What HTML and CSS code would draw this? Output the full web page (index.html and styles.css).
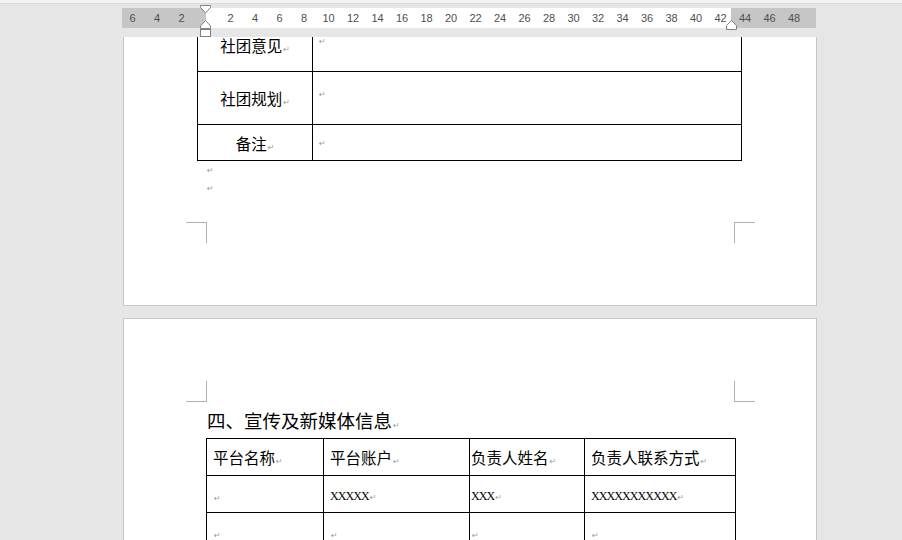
FILE: index.html
```html
<!DOCTYPE html>
<html lang="zh-CN">
<head>
<meta charset="utf-8">
<title>社团文档</title>
<link rel="stylesheet" href="styles.css">
</head>
<body>
<div class="topband"></div>
<div class="rulerbar">
  <div class="ruler">
    <div class="ticks">
      <span>6</span><span>4</span><span>2</span><span></span>
      <span>2</span><span>4</span><span>6</span><span>8</span><span>10</span><span>12</span><span>14</span><span>16</span><span>18</span><span>20</span><span>22</span><span>24</span>
      <span>26</span><span>28</span><span>30</span><span>32</span><span>34</span><span>36</span><span>38</span><span>40</span><span>42</span><span>44</span><span>46</span><span>48</span>
    </div>
    <svg class="marker-left" width="12" height="33" viewBox="0 0 12 33">
      <path d="M0.5 0.5 H10.5 V2.5 L5.5 8 L0.5 2.5 Z" fill="#fff" stroke="#808080"/>
      <path d="M5.5 15.5 L10.5 21 V23.5 H0.5 V21 Z" fill="#fff" stroke="#808080"/>
      <rect x="0.5" y="24.5" width="10" height="7" fill="#fff" stroke="#808080"/>
    </svg>
    <svg class="marker-right" width="12" height="11" viewBox="0 0 12 11">
      <path d="M5.5 0.5 L10.5 5.5 V9.5 H0.5 V5.5 Z" fill="#fff" stroke="#808080"/>
    </svg>
  </div>
</div>

<div class="page page1">
  <table class="t1">
    <colgroup><col class="c1a"><col class="c1b"></colgroup>
    <tr class="r-tall"><td class="lbl">社团意见<span class="pm">↵</span></td><td class="val"><span class="pm">↵</span></td></tr>
    <tr class="r-tall"><td class="lbl">社团规划<span class="pm">↵</span></td><td class="val"><span class="pm">↵</span></td></tr>
    <tr class="r-short"><td class="lbl">备注<span class="pm">↵</span></td><td class="val val-short"><span class="pm">↵</span></td></tr>
  </table>
  <div class="emptyline"><span class="pm">↵</span></div>
  <div class="emptyline"><span class="pm">↵</span></div>
  <div class="corners corners-bottom">
    <div class="corner corner-bl"></div>
    <div class="corner corner-br"></div>
  </div>
</div>

<div class="page page2">
  <div class="corners corners-top">
    <div class="corner corner-tl"></div>
    <div class="corner corner-tr"></div>
  </div>
  <h2 class="heading">四、宣传及新媒体信息<span class="pm">↵</span></h2>
  <table class="t2">
    <colgroup><col class="c2a"><col class="c2b"><col class="c2c"><col class="c2d"></colgroup>
    <tr><td>平台名称<span class="pm">↵</span></td><td>平台账户<span class="pm">↵</span></td><td class="tight">负责人姓名<span class="pm">↵</span></td><td>负责人联系方式<span class="pm">↵</span></td></tr>
    <tr><td><span class="pm">↵</span></td><td><span class="xx">XXXXX</span><span class="pm">↵</span></td><td class="tight"><span class="xx">XXX</span><span class="pm">↵</span></td><td><span class="xx">XXXXXXXXXXX</span><span class="pm">↵</span></td></tr>
    <tr><td><span class="pm">↵</span></td><td><span class="pm">↵</span></td><td class="tight"><span class="pm">↵</span></td><td><span class="pm">↵</span></td></tr>
  </table>
</div>
</body>
</html>
```

FILE: styles.css
```css
html, body {
  margin: 0;
  padding: 0;
}
body {
  width: 902px;
  height: 540px;
  overflow: hidden;
  background: #e6e6e6;
  font-family: "Noto Sans CJK SC", "Liberation Sans", sans-serif;
  color: #000;
}

.topband {
  height: 3px;
  background: #f3f3f3;
  border-bottom: 1px solid #d9d9d9;
}

.rulerbar {
  height: 33px;
  padding-top: 4px;
  box-sizing: border-box;
}
.ruler {
  position: relative;
  margin-left: 122px;
  width: 694px;
  height: 20px;
  background: linear-gradient(to right, #c6c6c6 0 84px, #ffffff 84px 609px, #c6c6c6 609px 694px);
}
.ticks {
  display: flex;
  margin-left: -1.75px;
  height: 20px;
  align-items: center;
  font-family: "Liberation Sans", Arial, sans-serif;
  font-size: 11px;
  color: #4f4f4f;
}
.ticks span {
  flex: 0 0 24.5px;
  text-align: center;
  line-height: 20px;
}
.marker-left {
  position: absolute;
  left: 78px;
  top: -3px;
}
.marker-right {
  position: absolute;
  left: 604px;
  top: 12px;
}

.page {
  margin-left: 123px;
  width: 694px;
  box-sizing: border-box;
  background: #fff;
  border: 1px solid #c6c6c6;
  overflow: hidden;
}
.page1 {
  border-top: none;
  height: 269px;
}
.page2 {
  margin-top: 12px;
  height: 240px;
}

.pm {
  font-family: "DejaVu Sans", sans-serif;
  font-size: 8px;
  line-height: 8px;
  color: #9a9a9a;
  margin-left: 1px;
}

table {
  border-collapse: collapse;
  table-layout: fixed;
}
td {
  border: 1px solid #000;
  padding: 0;
}

.t1 {
  margin-left: 73px;
  margin-top: -19px;
  width: 544px;
  font-size: 15.5px;
}
.c1a { width: 115px; }
.c1b { width: 429px; }
.r-tall { height: 53px; }
.r-short { height: 36px; }
.t1 .lbl {
  text-align: center;
  vertical-align: middle;
  line-height: 20px;
}
.t1 .val {
  vertical-align: top;
  padding: 10px 0 0 5px;
  line-height: 16px;
}
.t1 .val-short {
  padding-top: 6px;
}

.emptyline {
  margin-left: 83px;
  height: 18px;
  line-height: 18px;
}
.emptyline .pm {
  vertical-align: 4px;
  margin-left: 0;
}

.corners {
  display: flex;
  justify-content: space-between;
  padding: 0 61px 0 62px;
}
.corners-bottom {
  margin-top: 25px;
}
.corners-top {
  margin-top: 62px;
}
.corner {
  width: 20px;
  height: 20px;
  border: 0 solid #b0b0b0;
}
.corner-bl { border-top-width: 1px; border-right-width: 1px; }
.corner-br { border-top-width: 1px; border-left-width: 1px; }
.corner-tl { border-bottom-width: 1px; border-right-width: 1px; }
.corner-tr { border-bottom-width: 1px; border-left-width: 1px; }

.heading {
  margin: 6px 0 6px 83px;
  height: 24px;
  font-size: 18.5px;
  font-weight: 400;
  line-height: 24px;
}

.t2 {
  margin-left: 82px;
  width: 529px;
  font-size: 15.5px;
}
.c2a { width: 117px; }
.c2b { width: 146px; }
.c2c { width: 115px; }
.c2d { width: 151px; }
.t2 tr { height: 37px; }
.t2 td {
  vertical-align: middle;
  padding-left: 6px;
  line-height: 20px;
}
.t2 td.tight {
  padding-left: 1px;
}
.xx {
  font-family: "Liberation Serif", "Times New Roman", serif;
  font-size: 12px;
  letter-spacing: -0.9px;
}
```
